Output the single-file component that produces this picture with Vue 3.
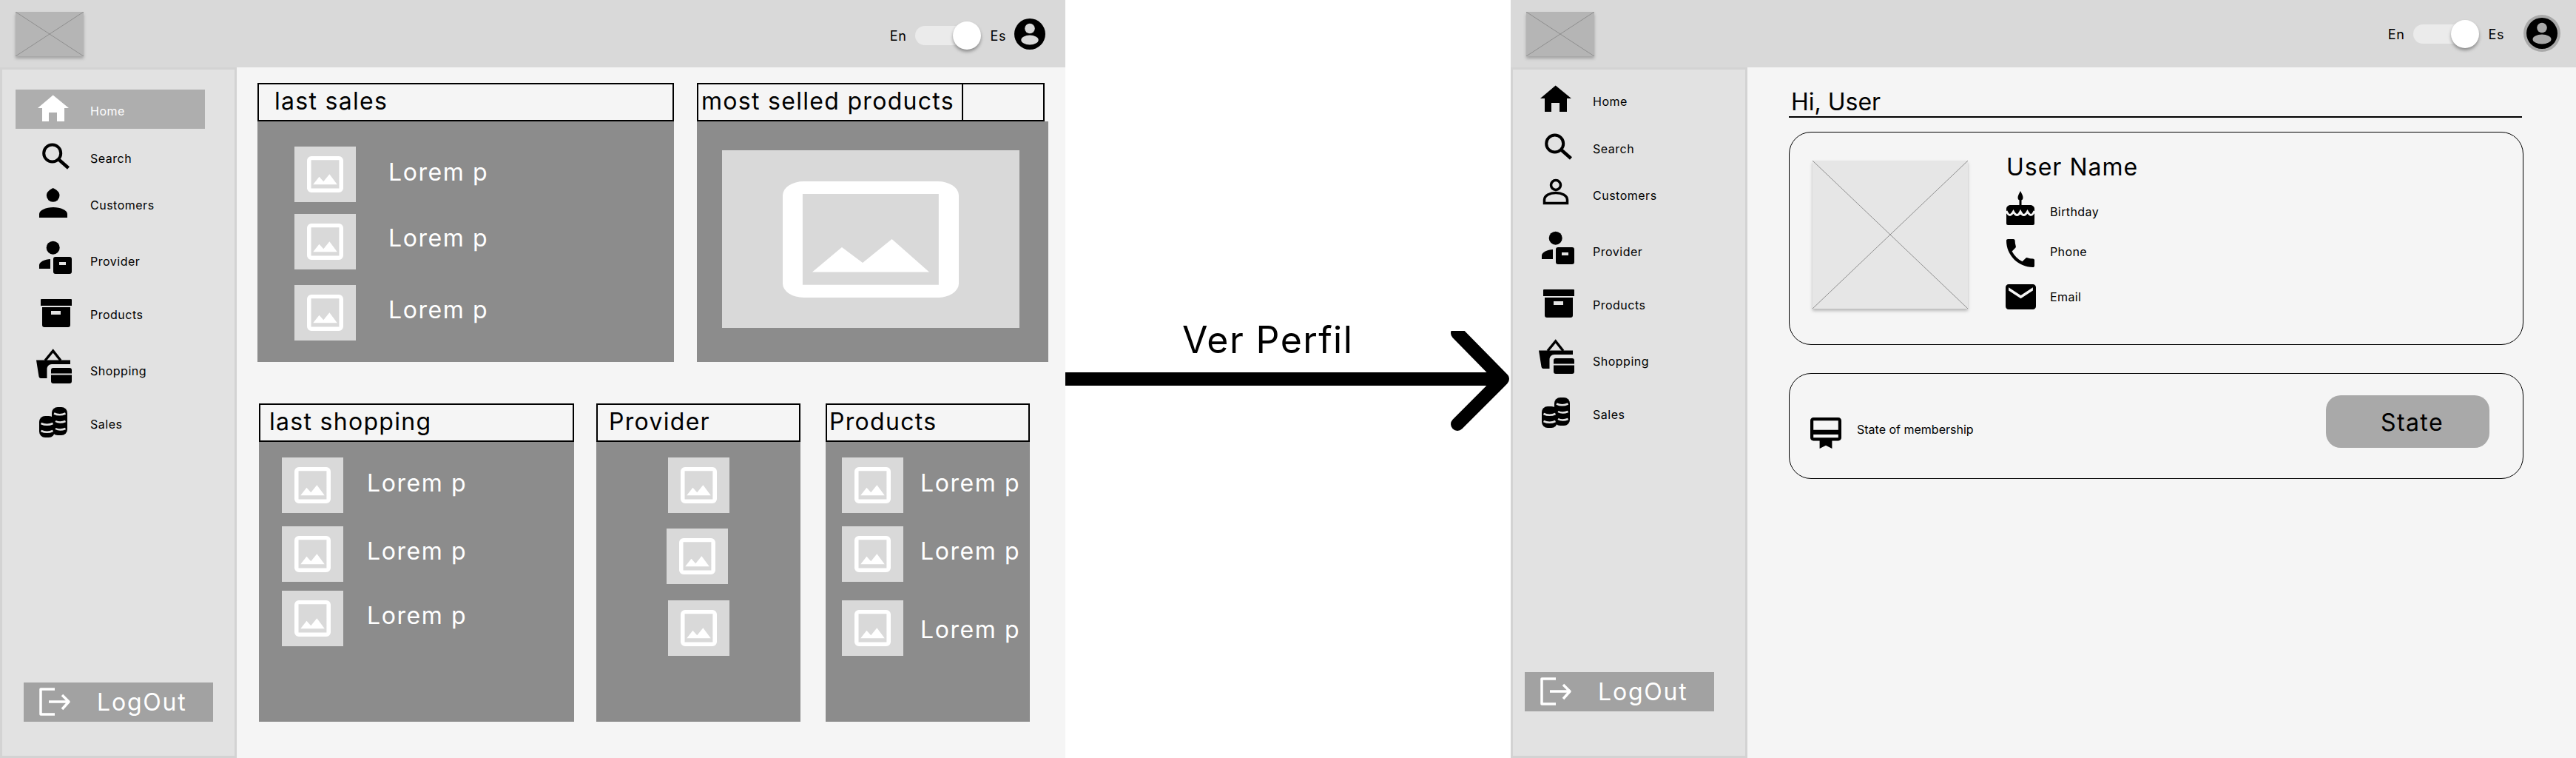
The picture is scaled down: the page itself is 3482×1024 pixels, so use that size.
<script setup>
// Menu lateral: gap = espacio sobre cada fila
const menu = [
  { label: 'Home', icon: 'i-home', gap: 0 },
  { label: 'Search', icon: 'i-search', gap: 20 },
  { label: 'Customers', icon: 'i-customer', gap: 19 },
  { label: 'Provider', icon: 'i-provider', gap: 32 },
  { label: 'Products', icon: 'i-products', gap: 28 },
  { label: 'Shopping', icon: 'i-shopping', gap: 32 },
  { label: 'Sales', icon: 'i-sales', gap: 28 }
]

const menuPerfil = menu.map(m =>
  m.icon === 'i-customer' ? { ...m, icon: 'i-customer-line' } : m
)

// Paneles de la pantalla Home
const lastSales = {
  title: 'last sales', titlePad: 21, width: 563, bodyPad: 50, textGap: 44, height: 325,
  rows: [
    { top: 34, up: 7, text: 'Lorem p' },
    { top: 16, up: 11, text: 'Lorem p' },
    { top: 21, up: 9, text: 'Lorem p' }
  ]
}

const bottomPanels = [
  {
    title: 'last shopping', titlePad: 12, width: 426, bodyPad: 31, textGap: 32, height: 378,
    rows: [
      { top: 21, up: 7, text: 'Lorem p' },
      { top: 18, up: 9, text: 'Lorem p' },
      { top: 12, up: 9, text: 'Lorem p' }
    ]
  },
  {
    title: 'Provider', titlePad: 15, width: 276, bodyPad: 97, textGap: 0, height: 378,
    rows: [
      { top: 21, up: 0, text: '' },
      { top: 21, up: 0, text: '', dx: -2 },
      { top: 22, up: 0, text: '' }
    ]
  },
  {
    title: 'Products', titlePad: 3, width: 276, bodyPad: 22, textGap: 23, height: 378,
    rows: [
      { top: 21, up: 7, text: 'Lorem p' },
      { top: 18, up: 9, text: 'Lorem p' },
      { top: 25, up: -3, text: 'Lorem p' }
    ]
  }
]
</script>

<template>
  <!-- Iconos compartidos -->
  <svg class="sprite" aria-hidden="true">
    <symbol id="i-home" viewBox="0 0 48 48">
      <path d="M22.7 2.5 44 20H38V38H28V26H17V38H8V20H2Z" />
    </symbol>
    <symbol id="i-search" viewBox="0 0 48 48">
      <circle cx="21.7" cy="17" r="11.5" fill="none" stroke="currentColor" stroke-width="4" />
      <path d="M31 26 43.5 37" fill="none" stroke="currentColor" stroke-width="4.5" />
    </symbol>
    <symbol id="i-customer" viewBox="0 0 48 48">
      <path d="M22.7 1 C27 3 31.5 6 31.5 11 A8.8 8.8 0 0 1 13.9 11 C13.9 6 18.5 3 22.7 1Z" />
      <path d="M4 41V36C4 31 13 27 23 27S42 31 42 36V41Z" />
    </symbol>
    <symbol id="i-customer-line" viewBox="0 0 48 48">
      <circle cx="23" cy="10" r="6.5" fill="none" stroke="currentColor" stroke-width="3.5" />
      <path d="M7.5 34.5V30C7.5 24 15 20.500 23 20.500S38.500 24 38.500 30V34.500Z" fill="none" stroke="currentColor" stroke-width="3.500" />
    </symbol>
    <symbol id="i-provider" viewBox="0 0 48 48" overflow="visible">
      <circle cx="22.7" cy="5.7" r="9" />
      <path d="M19 21V34H4V29C4 25 12 21 19 21Z" />
      <path fill-rule="evenodd" d="M26 18H45A3 3 0 0 1 48 21V38A3 3 0 0 1 45 41H26A3 3 0 0 1 23 38V21A3 3 0 0 1 26 18ZM31 25V29H40V25Z" />
    </symbol>
    <symbol id="i-products" viewBox="0 0 48 48">
      <path d="M7 3H47A1 1 0 0 1 48 4V12H6V4A1 1 0 0 1 7 3Z" />
      <path fill-rule="evenodd" d="M8 14H46V38A3 3 0 0 1 43 41H11A3 3 0 0 1 8 38ZM20 19V24H33V19Z" />
    </symbol>
    <symbol id="i-shopping" viewBox="0 0 48 48" overflow="visible">
      <path d="M12 10 22.700 -3 33 10" fill="none" stroke="currentColor" stroke-width="3.500" />
      <path d="M0 9.500H46V15H21C17 15 14.500 18 14.500 22V34H6C4.500 34 4 33 3.500 31.500Z" />
      <path fill-rule="evenodd" d="M23 20H45A3 3 0 0 1 48 23V38A3 3 0 0 1 45 41H23A3 3 0 0 1 20 38V23A3 3 0 0 1 23 20ZM20 27.500V29.500H48V27.500Z" />
    </symbol>
    <symbol id="i-sales" viewBox="0 0 48 48" overflow="visible">
      <rect x="21" y="1" width="21" height="38" rx="8" />
      <rect x="4" y="13" width="21" height="29" rx="8" />
      <g fill="none" stroke="#e2e2e2" stroke-width="2.500">
        <path d="M24 9.500Q31.500 13 39.500 9.500M26 20Q32 23 39.500 20M26 30Q32 33 39.500 30" />
        <path d="M6.500 23Q14.500 26.500 22.500 23M6.500 33Q14.500 36.500 22.500 33" />
      </g>
    </symbol>
    <symbol id="i-logout" viewBox="0 0 48 48">
      <path d="M23 6H4V40H23M15 23H42M33 14 42 23 33 33" fill="none" stroke="currentColor" stroke-width="3.500" stroke-linejoin="round" />
    </symbol>
    <symbol id="i-picture" viewBox="0 0 100 100" preserveAspectRatio="none">
      <path fill-rule="evenodd" d="M12 0H88A12 12 0 0 1 100 12V88A12 12 0 0 1 88 100H12A12 12 0 0 1 0 88V12A12 12 0 0 1 12 0ZM11.300 10.800V89H88.600V10.800ZM16.800 78 33.600 56.700 45.400 70 62 49.700 83.200 78Z" />
    </symbol>
  </svg>

  <div class="lienzo">
    <!-- Pantalla Home -->
    <section class="pantalla">
      <header class="cabecera">
        <div class="logo">
          <svg viewBox="0 0 92 60" preserveAspectRatio="none">
            <path d="M0 0 92 60M92 0 0 60" stroke="#8f8f8f" stroke-width="1" vector-effect="non-scaling-stroke" />
          </svg>
        </div>
        <div class="idioma">
          <span>En</span>
          <span class="interruptor"><span class="perilla"></span></span>
          <span>Es</span>
          <svg class="avatar" viewBox="0 0 42 42">
            <circle cx="21" cy="21" r="21" fill="#000" />
            <circle cx="21" cy="13.500" r="6.800" fill="#d9d9d9" />
            <ellipse cx="21" cy="29" rx="11.700" ry="6.500" fill="#d9d9d9" />
          </svg>
        </div>
      </header>

      <div class="cuerpo">
        <aside class="lateral">
          <nav class="menu">
            <a
              v-for="item in menu"
              :key="item.label"
              class="menu-item"
              :class="{ activo: item.label === 'Home' }"
              :style="{ marginTop: item.gap + 'px' }"
            >
              <svg class="menu-icono"><use :href="'#' + item.icon" /></svg>
              <span>{{ item.label }}</span>
            </a>
          </nav>
          <a class="salir">
            <svg class="menu-icono"><use href="#i-logout" /></svg>
            <span>LogOut</span>
          </a>
        </aside>

        <main class="contenido">
          <div class="fila-paneles">
            <article :style="{ width: lastSales.width + 'px' }">
              <h2 class="panel-titulo" :style="{ paddingLeft: lastSales.titlePad + 'px' }">{{ lastSales.title }}</h2>
              <div class="panel-cuerpo" :style="{ height: lastSales.height + 'px', paddingLeft: lastSales.bodyPad + 'px' }">
                <div v-for="(fila, i) in lastSales.rows" :key="i" class="lista-fila" :style="{ marginTop: fila.top + 'px' }">
                  <div class="miniatura"><svg><use href="#i-picture" /></svg></div>
                  <span class="lorem" :style="{ marginLeft: lastSales.textGap + 'px', marginBottom: fila.up + 'px' }">{{ fila.text }}</span>
                </div>
              </div>
            </article>

            <article class="panel-destacado">
              <h2 class="panel-titulo titulo-partido">
                <span>most selled products</span>
              </h2>
              <div class="panel-cuerpo destacado-cuerpo">
                <div class="imagen-grande"><svg><use href="#i-picture" /></svg></div>
              </div>
            </article>
          </div>

          <div class="fila-paneles fila-inferior">
            <article v-for="panel in bottomPanels" :key="panel.title" :style="{ width: panel.width + 'px' }">
              <h2 class="panel-titulo" :style="{ paddingLeft: panel.titlePad + 'px' }">{{ panel.title }}</h2>
              <div class="panel-cuerpo" :style="{ height: panel.height + 'px', paddingLeft: panel.bodyPad + 'px' }">
                <div
                  v-for="(fila, i) in panel.rows"
                  :key="i"
                  class="lista-fila"
                  :style="{ marginTop: fila.top + 'px', marginLeft: (fila.dx || 0) + 'px' }"
                >
                  <div class="miniatura"><svg><use href="#i-picture" /></svg></div>
                  <span
                    v-if="fila.text"
                    class="lorem"
                    :style="{ marginLeft: panel.textGap + 'px', marginBottom: fila.up + 'px' }"
                  >{{ fila.text }}</span>
                </div>
              </div>
            </article>
          </div>
        </main>
      </div>
    </section>

    <!-- Flecha entre pantallas -->
    <div class="conector">
      <div class="conector-texto">Ver Perfil</div>
      <svg class="flecha" viewBox="0 0 602 140">
        <path d="M0 65H590" stroke="#000" stroke-width="18" />
        <path d="M530 3 591 65 530 126" fill="none" stroke="#000" stroke-width="18" stroke-linecap="round" stroke-linejoin="round" />
      </svg>
    </div>

    <!-- Pantalla Perfil -->
    <section class="pantalla perfil">
      <header class="cabecera">
        <div class="logo">
          <svg viewBox="0 0 92 60" preserveAspectRatio="none">
            <path d="M0 0 92 60M92 0 0 60" stroke="#8f8f8f" stroke-width="1" vector-effect="non-scaling-stroke" />
          </svg>
        </div>
        <div class="idioma">
          <span>En</span>
          <span class="interruptor"><span class="perilla"></span></span>
          <span>Es</span>
          <svg class="avatar" viewBox="0 0 50 50">
            <circle cx="25" cy="25" r="25" fill="#a9a9a9" />
            <circle cx="25" cy="25" r="21" fill="#000" />
            <circle cx="25" cy="17.500" r="6.800" fill="#a9a9a9" />
            <ellipse cx="25" cy="33" rx="12.500" ry="6.500" fill="#a9a9a9" />
          </svg>
        </div>
      </header>

      <div class="cuerpo">
        <aside class="lateral">
          <nav class="menu">
            <a
              v-for="item in menuPerfil"
              :key="item.label"
              class="menu-item"
              :style="{ marginTop: item.gap + 'px' }"
            >
              <svg class="menu-icono"><use :href="'#' + item.icon" /></svg>
              <span>{{ item.label }}</span>
            </a>
          </nav>
          <a class="salir">
            <svg class="menu-icono"><use href="#i-logout" /></svg>
            <span>LogOut</span>
          </a>
        </aside>

        <main class="contenido-perfil">
          <h1 class="saludo">Hi, User</h1>

          <div class="tarjeta tarjeta-usuario">
            <div class="foto">
              <svg viewBox="0 0 210 200" preserveAspectRatio="none">
                <path d="M0 0 210 200M210 0 0 200" stroke="#8f8f8f" stroke-width="1" vector-effect="non-scaling-stroke" />
              </svg>
            </div>
            <div class="datos">
              <h2 class="nombre">User Name</h2>
              <div class="dato dato-cumple">
                <svg class="dato-icono" width="38" height="46" viewBox="0 0 38 46">
                  <path d="M19 0C21 4 22.500 6.500 22.500 9A3.500 3.500 0 0 1 15.500 9C15.500 6.500 17 4 19 0Z" />
                  <rect x="17.500" y="12" width="3" height="8" />
                  <path d="M0 24C0 21 3 19 6 19H32C35 19 38 21 38 24V44A2 2 0 0 1 36 46H2A2 2 0 0 1 0 44Z" />
                  <path d="M0 27C3 34 6 34 9.500 28C13 34 16 34 19 28C22 34 25 34 28.500 28C32 34 35 34 38 27" fill="none" stroke="#f5f5f5" stroke-width="3" />
                </svg>
                <span class="dato-texto">Birthday</span>
              </div>
              <div class="dato dato-telefono">
                <svg class="dato-icono" width="38" height="38" viewBox="3 3 18 18">
                  <path d="M6.620 10.790c1.440 2.830 3.760 5.140 6.590 6.590l2.200-2.200c.27-.27.67-.36 1.020-.24 1.120.37 2.330.57 3.570.57.55 0 1 .45 1 1V20c0 .55-.45 1-1 1-9.390 0-17-7.610-17-17 0-.55.45-1 1-1h3.500c.55 0 1 .45 1 1 0 1.250.2 2.450.57 3.570.11.35.03.74-.25 1.020l-2.200 2.200z" />
                </svg>
                <span class="dato-texto">Phone</span>
              </div>
              <div class="dato dato-correo">
                <svg class="dato-icono" width="41" height="34" viewBox="2 4 20 16" preserveAspectRatio="none">
                  <path d="M20 4H4c-1.100 0-2 .9-2 2v12c0 1.100.9 2 2 2h16c1.100 0 2-.9 2-2V6c0-1.100-.9-2-2-2zm0 4l-8 5-8-5V6l8 5 8-5v2z" />
                </svg>
                <span class="dato-texto">Email</span>
              </div>
            </div>
          </div>

          <div class="tarjeta tarjeta-membresia">
            <svg class="membresia-icono" width="42" height="42" viewBox="2 2 20 20">
              <path d="M20 2H4c-1.110 0-2 .89-2 2v11c0 1.110.89 2 2 2h4v5l4-2 4 2v-5h4c1.110 0 2-.89 2-2V4c0-1.110-.89-2-2-2zm0 13H4v-2h16v2zm0-5H4V4h16v6z" />
            </svg>
            <span class="membresia-texto">State of membership</span>
            <button class="estado">State</button>
          </div>
        </main>
      </div>
    </section>
  </div>
</template>

<style>
html, body {
  margin: 0;
  background: #fff;
}
</style>

<style scoped>
.sprite {
  position: absolute;
  width: 0;
  height: 0;
}

.lienzo {
  display: flex;
  width: 3482px;
  height: 1024px;
  overflow: hidden;
  font-family: Inter, "Liberation Sans", sans-serif;
  color: #000;
}

.pantalla {
  width: 1440px;
  flex-shrink: 0;
  display: flex;
  flex-direction: column;
  background: #f5f5f5;
}

/* Cabecera */
.cabecera {
  height: 91px;
  flex-shrink: 0;
  display: flex;
  align-items: center;
  justify-content: space-between;
  padding: 0 27px 0 21px;
  background: #d9d9d9;
}

.logo {
  width: 92px;
  height: 60px;
  background: #b5b5b5;
  box-shadow: 0 3px 4px rgba(0, 0, 0, 0.25);
}

.logo svg,
.foto svg {
  display: block;
  width: 100%;
  height: 100%;
}

.idioma {
  display: flex;
  align-items: center;
  gap: 12px;
  margin-top: 5px;
  font-size: 18px;
  letter-spacing: 0.6px;
}

.interruptor {
  position: relative;
  display: block;
  width: 89px;
  height: 38px;
}

.interruptor::before {
  content: '';
  position: absolute;
  left: 0;
  top: 6px;
  width: 81px;
  height: 26px;
  border-radius: 13px;
  background: #ebebeb;
}

.perilla {
  position: absolute;
  right: 0;
  top: 0;
  width: 38px;
  height: 38px;
  border-radius: 50%;
  background: #fff;
  box-shadow: 0 3px 4px rgba(0, 0, 0, 0.35);
}

.avatar {
  width: 42px;
  height: 42px;
  margin-left: -1px;
  margin-top: -5px;
}

.perfil .cabecera {
  padding-right: 21px;
}

.perfil .idioma {
  margin-top: 1px;
  margin-left: auto;
}

.perfil .avatar {
  width: 50px;
  height: 50px;
  margin-left: 14px;
  margin-top: -2px;
}

.cuerpo {
  flex: 1;
  display: flex;
  min-height: 0;
}

/* Menu lateral */
.lateral {
  width: 320px;
  flex-shrink: 0;
  box-sizing: border-box;
  display: flex;
  flex-direction: column;
  justify-content: space-between;
  padding: 27px 0 46px;
  background: #e2e2e2;
  border: 3px solid #d3d3d3;
}

.perfil .lateral {
  padding: 21px 0 60px;
}

.menu {
  display: flex;
  flex-direction: column;
}

.menu-item {
  display: flex;
  align-items: center;
  gap: 25px;
  width: 256px;
  height: 44px;
  box-sizing: content-box;
  margin-left: 18px;
  padding-left: 28px;
  font-size: 16px;
  letter-spacing: 0.5px;
  color: #000;
}

.perfil .menu-item {
  margin-left: 18px;
  padding-left: 17px;
}

.menu-item.activo {
  box-sizing: border-box;
  height: 53px;
  padding-top: 5px;
  margin-bottom: -2px;
  margin-top: 0;
  background: #aeaeae;
  color: #fff;
}

.menu-icono {
  display: block;
  width: 48px;
  height: 48px;
  flex-shrink: 0;
  fill: currentColor;
  overflow: visible;
}

.salir {
  display: flex;
  align-items: center;
  gap: 32px;
  width: 256px;
  height: 53px;
  box-sizing: border-box;
  margin-left: 29px;
  padding-left: 19px;
  background: #a2a2a2;
  color: #fff;
  font-size: 32px;
  letter-spacing: 1.8px;
}

.perfil .salir {
  margin-left: 16px;
}

/* Paneles */
.contenido {
  flex: 1;
  padding: 21px 0 0 28px;
}

.fila-paneles {
  display: flex;
  gap: 31px;
}

.fila-inferior {
  gap: 30px;
  margin-top: 56px;
  margin-left: 2px;
}

.fila-inferior article:last-child {
  margin-left: 4px;
}

.panel-titulo {
  display: flex;
  align-items: center;
  height: 52px;
  box-sizing: border-box;
  margin: 0;
  padding-bottom: 3px;
  border: 2px solid #000;
  font-size: 32px;
  font-weight: 400;
  letter-spacing: 1.3px;
  white-space: nowrap;
}

.panel-cuerpo {
  box-sizing: border-box;
  background: #8c8c8c;
  overflow: hidden;
}

.lista-fila {
  display: flex;
  align-items: center;
}

.miniatura {
  display: flex;
  align-items: center;
  justify-content: center;
  flex-shrink: 0;
  width: 83px;
  height: 75px;
  background: #d9d9d9;
}

.miniatura svg {
  display: block;
  width: 49px;
  height: 49px;
  fill: #fff;
}

.lorem {
  font-size: 32px;
  letter-spacing: 1.6px;
  color: #fff;
  white-space: nowrap;
}

.panel-destacado {
  width: 475px;
}

.titulo-partido {
  width: 470px;
  justify-content: flex-start;
  padding-left: 4px;
  padding-bottom: 0;
}

.titulo-partido span {
  display: flex;
  align-items: center;
  width: 354px;
  height: 100%;
  padding-bottom: 3px;
  box-sizing: border-box;
  border-right: 2px solid #000;
}

.destacado-cuerpo {
  height: 325px;
  padding: 39px 0 0 34px;
}

.imagen-grande {
  display: flex;
  align-items: center;
  justify-content: center;
  width: 402px;
  height: 240px;
  background: #d9d9d9;
}

.imagen-grande svg {
  display: block;
  width: 238px;
  height: 157px;
  fill: #fff;
}

/* Perfil */
.contenido-perfil {
  flex: 1;
  padding: 0 71px 0 56px;
}

.saludo {
  height: 68px;
  box-sizing: border-box;
  margin: 0 2px 0 0;
  padding: 29px 0 0 3px;
  border-bottom: 2px solid #000;
  font-size: 32px;
  line-height: 36px;
  font-weight: 400;
}

.tarjeta {
  box-sizing: border-box;
  border: 1.5px solid #000;
  border-radius: 30px;
}

.tarjeta-usuario {
  display: flex;
  align-items: flex-start;
  height: 288px;
  margin-top: 19px;
  padding: 27px 0 0 31px;
}

.foto {
  width: 210px;
  height: 200px;
  margin-top: 11px;
  background: #e6e6e6;
  box-shadow: 0 3px 4px rgba(0, 0, 0, 0.25);
}

.datos {
  margin-left: 52px;
}

.nombre {
  margin: 0 0 12px 0;
  font-size: 32px;
  line-height: 40px;
  font-weight: 400;
  letter-spacing: 1px;
}

.dato {
  display: flex;
  align-items: center;
  gap: 21px;
}

.dato-icono {
  display: block;
  flex-shrink: 0;
}

.dato-texto {
  font-size: 16px;
  letter-spacing: 0.4px;
}

.dato-cumple .dato-texto {
  margin-top: 10px;
}

.dato-telefono {
  margin-top: 19px;
}

.dato-telefono .dato-texto {
  margin-bottom: 4px;
}

.dato-correo {
  margin-top: 23px;
  margin-left: -1px;
  gap: 19px;
}

.tarjeta-membresia {
  display: flex;
  align-items: center;
  height: 143px;
  margin-top: 38px;
  padding: 0 45px 0 28px;
}

.membresia-icono {
  display: block;
  flex-shrink: 0;
  margin-top: 18px;
}

.membresia-texto {
  margin: 8px 0 0 21px;
  font-size: 16px;
}

.estado {
  width: 221px;
  height: 71px;
  margin-left: auto;
  margin-top: -12px;
  padding: 2px 0 0 12px;
  border: none;
  border-radius: 20px;
  background: #a9a9a9;
  color: #000;
  font-family: inherit;
  font-size: 32px;
  letter-spacing: 1.4px;
}

/* Flecha */
.conector {
  width: 602px;
  flex-shrink: 0;
  padding-top: 429px;
}

.conector-texto {
  height: 60px;
  padding-left: 158px;
  font-size: 50px;
  line-height: 60px;
  letter-spacing: 1.4px;
  white-space: nowrap;
}

.flecha {
  display: block;
  width: 602px;
  height: 140px;
  margin-top: -42px;
}
</style>
